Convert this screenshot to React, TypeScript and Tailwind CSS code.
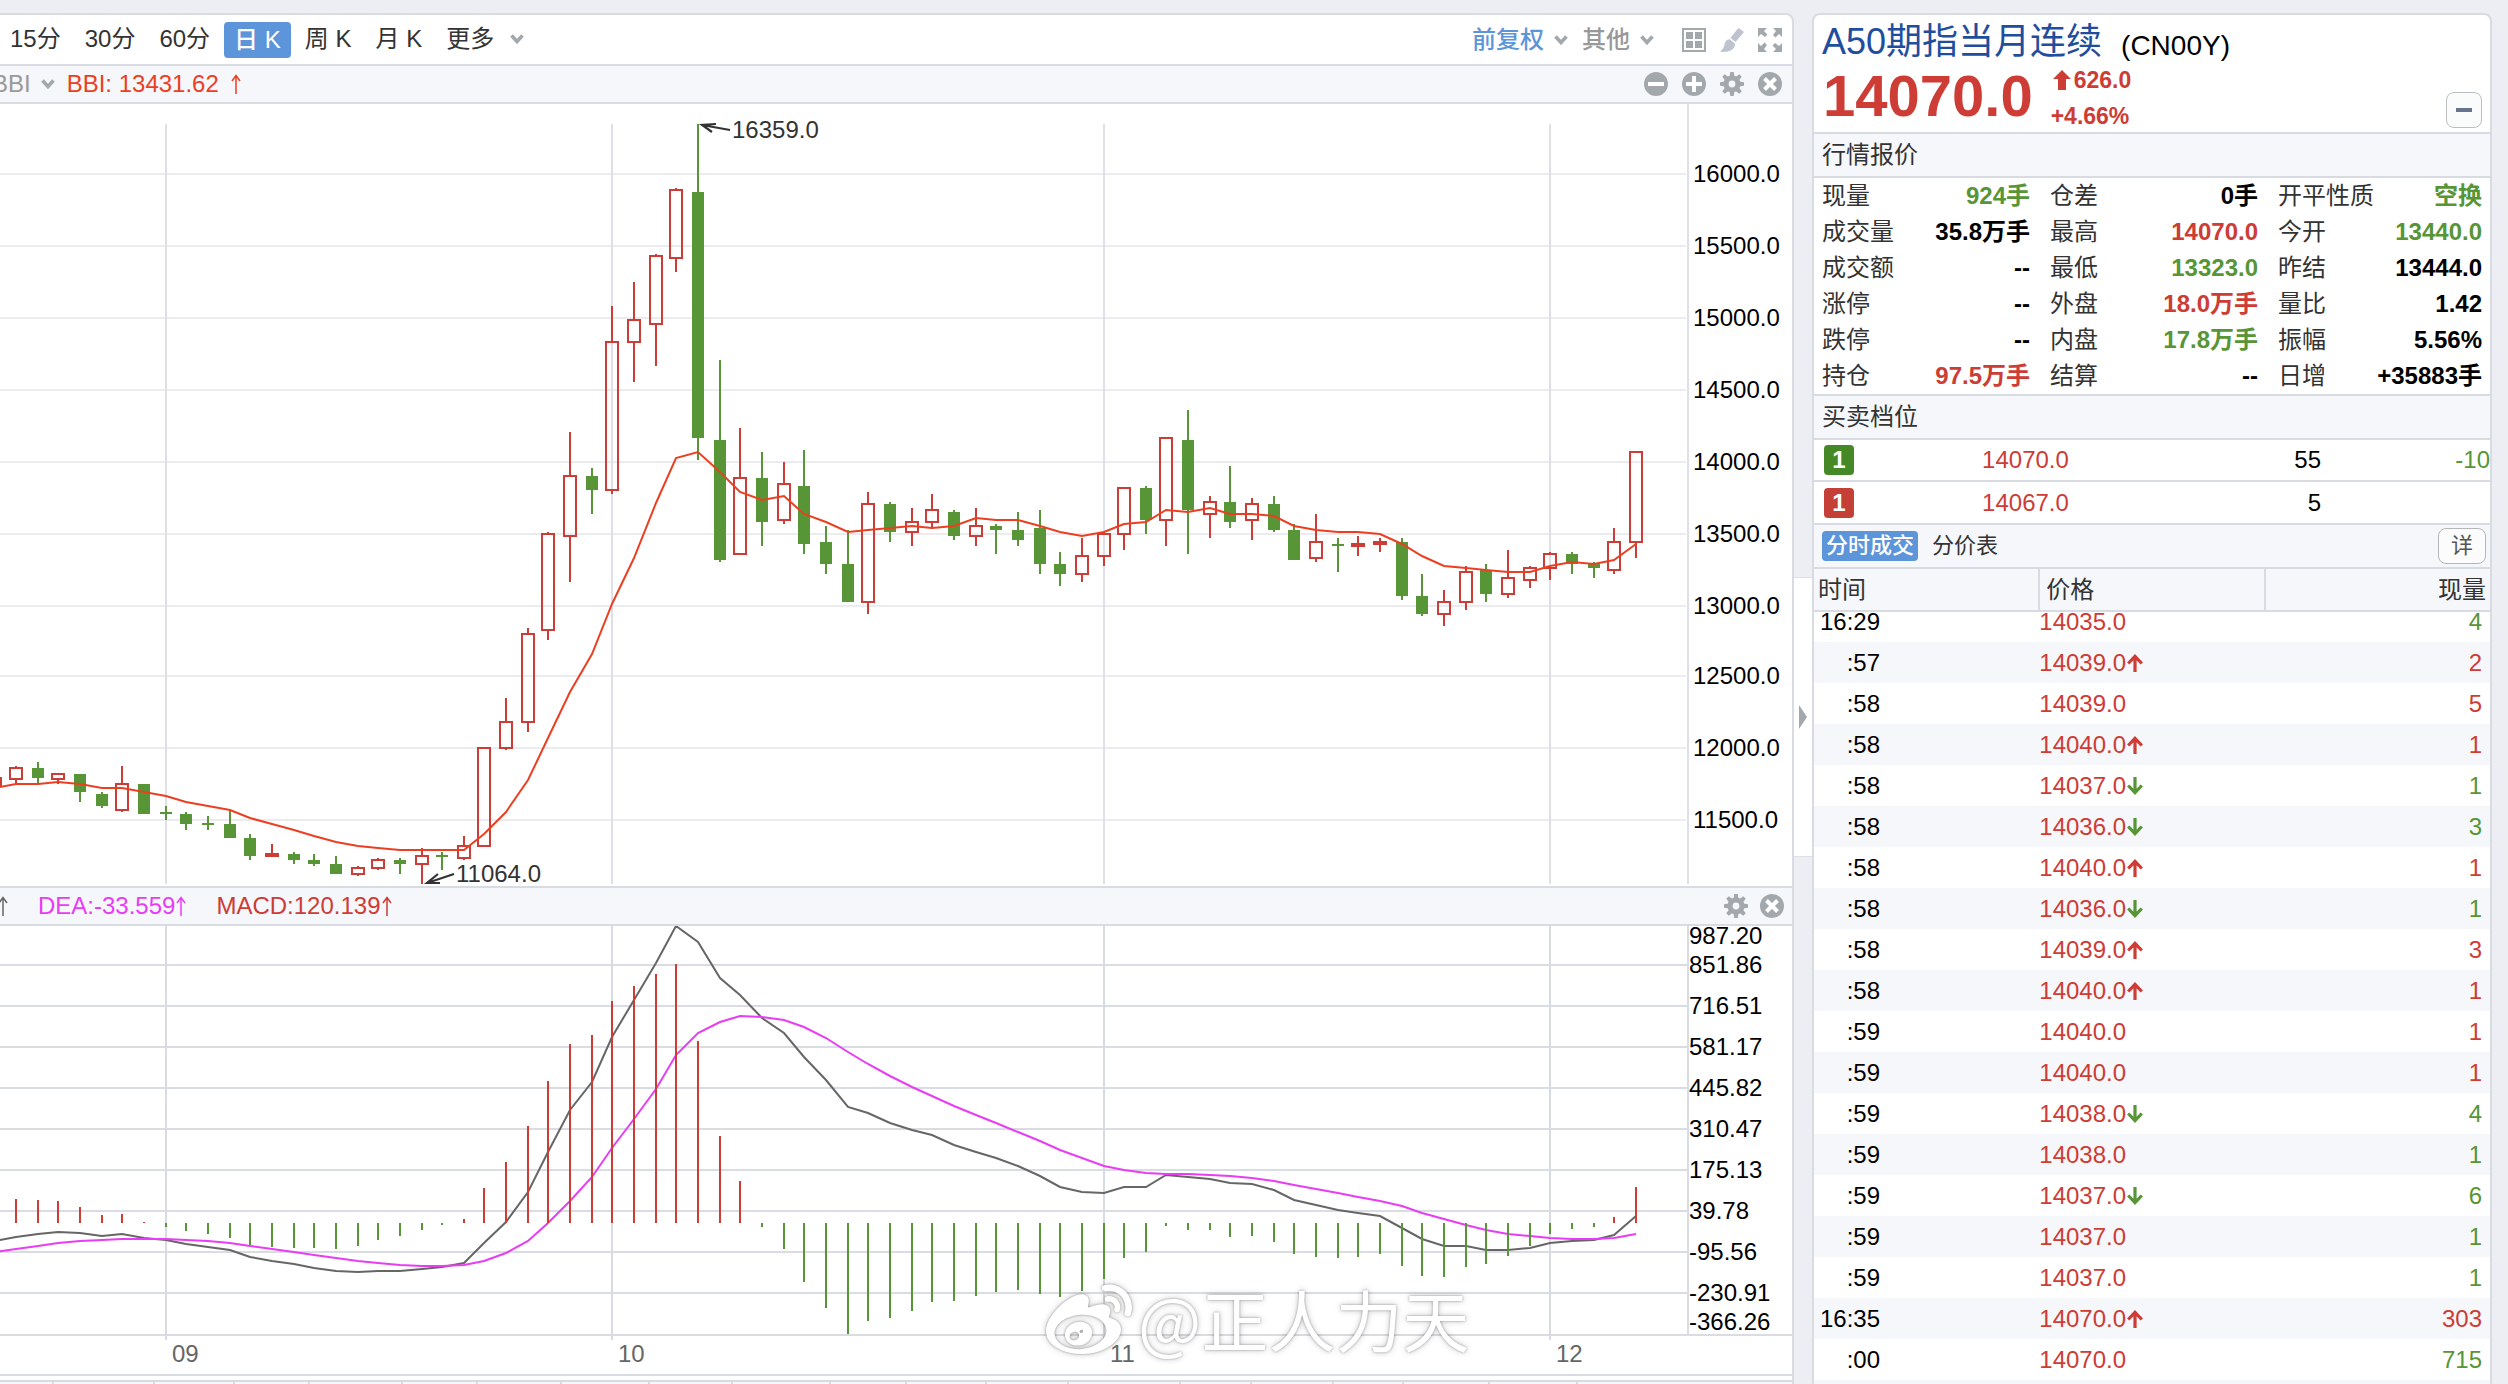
import React from "react";
import { FaWeibo } from "react-icons/fa";

type Tone = "up" | "down" | "flat";

const TONE: Record<Tone, string> = {
  up: "text-[#cd3c35]",
  down: "text-[#579536]",
  flat: "text-black",
};

const GREEN = "#579536";
const RED = "#cd3c35";

/* ---------- chart data: x, kind, wick top, body top, body bottom, wick bottom ---------- */

type Kind = "g" | "r" | "R";
type Candle = [number, Kind, number, number, number, number];

const CANDLES: Candle[] = [
  [-5, "r", 778, 778, 786, 786],
  [16, "r", 766, 768, 779, 784],
  [38, "g", 762, 768, 778, 784],
  [58, "r", 774, 774, 779, 784],
  [80, "g", 774, 774, 792, 802],
  [102, "g", 792, 794, 806, 808],
  [122, "r", 766, 784, 810, 812],
  [144, "g", 784, 784, 814, 814],
  [166, "g", 806, 812, 814, 820],
  [186, "g", 812, 814, 824, 830],
  [208, "g", 816, 823, 825, 830],
  [230, "g", 810, 824, 838, 838],
  [250, "g", 834, 838, 856, 860],
  [272, "R", 844, 853, 857, 857],
  [294, "g", 852, 854, 860, 864],
  [314, "g", 854, 860, 864, 866],
  [336, "g", 856, 864, 874, 874],
  [358, "r", 866, 868, 874, 876],
  [378, "r", 858, 860, 868, 870],
  [400, "g", 858, 860, 864, 874],
  [422, "r", 848, 856, 864, 884],
  [442, "g", 852, 855, 857, 870],
  [464, "r", 836, 846, 858, 860],
  [484, "r", 748, 748, 846, 846],
  [506, "r", 698, 722, 748, 750],
  [528, "r", 628, 634, 722, 732],
  [548, "r", 532, 534, 630, 640],
  [570, "r", 432, 476, 536, 582],
  [592, "g", 468, 476, 490, 514],
  [612, "r", 306, 342, 490, 494],
  [634, "r", 282, 320, 342, 382],
  [656, "r", 254, 256, 324, 366],
  [676, "r", 188, 190, 258, 272],
  [698, "g", 124, 192, 438, 460],
  [720, "g", 360, 440, 560, 562],
  [740, "r", 428, 478, 554, 554],
  [762, "g", 452, 478, 522, 546],
  [784, "r", 462, 484, 520, 524],
  [804, "g", 450, 486, 544, 554],
  [826, "g", 526, 542, 564, 574],
  [848, "g", 530, 564, 602, 602],
  [868, "r", 492, 504, 602, 614],
  [890, "g", 502, 504, 532, 542],
  [912, "r", 508, 522, 532, 546],
  [932, "r", 494, 510, 522, 528],
  [954, "g", 510, 512, 536, 540],
  [976, "r", 508, 526, 536, 546],
  [996, "g", 524, 526, 530, 554],
  [1018, "g", 512, 530, 540, 546],
  [1040, "g", 510, 528, 564, 574],
  [1060, "g", 552, 564, 574, 586],
  [1082, "r", 538, 556, 574, 582],
  [1104, "r", 532, 534, 556, 566],
  [1124, "r", 488, 488, 534, 550],
  [1146, "g", 486, 488, 520, 534],
  [1166, "r", 438, 438, 520, 546],
  [1188, "g", 410, 440, 510, 554],
  [1210, "r", 496, 502, 514, 538],
  [1230, "g", 466, 502, 522, 528],
  [1252, "r", 498, 504, 520, 540],
  [1274, "g", 496, 504, 530, 532],
  [1294, "g", 524, 530, 560, 560],
  [1316, "r", 514, 542, 558, 562],
  [1338, "g", 538, 544, 546, 572],
  [1358, "R", 536, 543, 547, 556],
  [1380, "R", 538, 541, 545, 552],
  [1402, "g", 538, 542, 596, 600],
  [1422, "g", 574, 596, 614, 616],
  [1444, "r", 590, 602, 614, 626],
  [1466, "r", 566, 572, 602, 610],
  [1486, "g", 564, 570, 594, 602],
  [1508, "r", 550, 578, 594, 598],
  [1530, "r", 566, 568, 580, 588],
  [1550, "r", 552, 554, 568, 580],
  [1572, "g", 552, 554, 564, 574],
  [1594, "g", 562, 564, 568, 578],
  [1614, "r", 528, 542, 570, 574],
  [1636, "r", 452, 452, 542, 558],
];

const BBI = [
  788, 784, 784, 782, 784, 788, 788, 792, 796, 802, 806, 810, 818, 824, 830, 836, 842, 846, 848, 850,
  850, 850, 850, 834, 812, 780, 738, 692, 654, 604, 558, 503, 458, 452, 472, 492, 500, 496, 514, 522,
  532, 530, 528, 526, 528, 526, 518, 520, 520, 526, 532, 536, 532, 524, 522, 510, 512, 508, 514, 514,
  516, 526, 530, 532, 532, 534, 544, 556, 566, 568, 570, 572, 572, 566, 562, 564, 560, 544,
];

const ZERO = 1223;

const MACD = [
  1223, 1199, 1200, 1201, 1207, 1215, 1214, 1222, 1227, 1231, 1234, 1238, 1245, 1247, 1248, 1248, 1249,
  1246, 1240, 1236, 1230, 1225, 1219, 1188, 1162, 1126, 1081, 1044, 1035, 1001, 986, 974, 964, 1041,
  1136, 1181, 1227, 1249, 1282, 1308, 1334, 1321, 1318, 1311, 1302, 1301, 1296, 1292, 1290, 1294, 1297,
  1291, 1279, 1258, 1252, 1226, 1230, 1230, 1237, 1236, 1242, 1254, 1257, 1258, 1257, 1254, 1266, 1276,
  1277, 1267, 1264, 1256, 1246, 1234, 1229, 1227, 1217, 1187,
];

const DIF = [
  1241, 1237, 1234, 1232, 1233, 1236, 1234, 1238, 1240, 1244, 1247, 1250, 1257, 1261, 1264, 1268, 1271,
  1272, 1271, 1271, 1269, 1267, 1263, 1243, 1222, 1192, 1152, 1110, 1082, 1037, 1000, 963, 926, 942, 978,
  995, 1018, 1033, 1057, 1080, 1107, 1113, 1123, 1130, 1135, 1145, 1152, 1158, 1166, 1176, 1187, 1192,
  1193, 1187, 1187, 1175, 1177, 1179, 1183, 1184, 1190, 1200, 1205, 1210, 1213, 1216, 1228, 1239, 1246,
  1246, 1250, 1250, 1248, 1243, 1241, 1240, 1235, 1216,
];

const DEA = [
  1252, 1249, 1246, 1243, 1241, 1240, 1239, 1239, 1239, 1240, 1241, 1243, 1246, 1249, 1252, 1255, 1258,
  1261, 1263, 1265, 1266, 1266, 1265, 1261, 1253, 1241, 1223, 1201, 1177, 1148, 1119, 1089, 1055, 1033,
  1022, 1016, 1017, 1020, 1027, 1038, 1052, 1064, 1076, 1087, 1096, 1106, 1115, 1123, 1132, 1141, 1150,
  1158, 1166, 1170, 1173, 1174, 1174, 1175, 1176, 1178, 1181, 1185, 1189, 1193, 1197, 1201, 1206, 1213,
  1219, 1225, 1230, 1234, 1236, 1238, 1239, 1239, 1238, 1234,
];

const line = (ys: number[]) => ys.map((y, i) => `${CANDLES[i][0]},${y}`).join(" ");

const PRICE_TICKS: [string, number][] = [
  ["16000.0", 174],
  ["15500.0", 246],
  ["15000.0", 318],
  ["14500.0", 390],
  ["14000.0", 462],
  ["13500.0", 534],
  ["13000.0", 606],
  ["12500.0", 676],
  ["12000.0", 748],
  ["11500.0", 820],
];

const MACD_TICKS: [string, number][] = [
  ["987.20", 936],
  ["851.86", 965],
  ["716.51", 1006],
  ["581.17", 1047],
  ["445.82", 1088],
  ["310.47", 1129],
  ["175.13", 1170],
  ["39.78", 1211],
  ["-95.56", 1252],
  ["-230.91", 1293],
  ["-366.26", 1322],
];

const MONTHS: [string, number][] = [
  ["09", 166],
  ["10", 612],
  ["11", 1104],
  ["12", 1550],
];

/* ---------- icons ---------- */

const Chevron = () => (
  <svg viewBox="0 0 14 10" className="h-[10px] w-[14px] shrink-0" aria-hidden="true">
    <path d="M1.5 1.5 7 7.5l5.5-6" fill="none" stroke="#a3a8ac" strokeWidth="3.6" />
  </svg>
);

const ThinArrow = () => (
  <svg viewBox="0 0 10 20" className="h-5 w-[10px] shrink-0" aria-hidden="true">
    <path d="M5 20V2M1 7l4-5.500L9 7" fill="none" stroke="currentColor" strokeWidth="1.500" />
  </svg>
);

const MinusCircle = () => (
  <svg viewBox="0 0 24 24" className="size-6" aria-hidden="true">
    <circle cx="12" cy="12" r="12" fill="#a3a8ac" />
    <path d="M4 12h16" stroke="#fff" strokeWidth="4" />
  </svg>
);

const PlusCircle = () => (
  <svg viewBox="0 0 24 24" className="size-6" aria-hidden="true">
    <circle cx="12" cy="12" r="12" fill="#a3a8ac" />
    <path d="M4 12h16M12 4v16" stroke="#fff" strokeWidth="4" />
  </svg>
);

const CloseCircle = () => (
  <svg viewBox="0 0 24 24" className="size-6" aria-hidden="true">
    <circle cx="12" cy="12" r="12" fill="#a3a8ac" />
    <path d="m6.5 6.5 11 11m0-11-11 11" stroke="#fff" strokeWidth="4" />
  </svg>
);

const Gear = () => (
  <svg viewBox="0 0 24 24" className="size-6" aria-hidden="true">
    <g fill="#a3a8ac">
      {[0, 45, 90, 135].map((a) => (
        <path key={a} d="M10.3 0h3.4l.8 5v14l-.8 5h-3.4l-.8-5V5z" transform={`rotate(${a} 12 12)`} />
      ))}
      <circle cx="12" cy="12" r="8.5" />
    </g>
    <circle cx="12" cy="12" r="3.4" fill="#f5f7fa" />
  </svg>
);

const GridIcon = () => (
  <svg viewBox="0 0 24 24" className="size-6" aria-hidden="true">
    <rect x="1" y="1" width="22" height="22" fill="none" stroke="#a3a8ac" strokeWidth="2" />
    <path d="M4 4h7v7H4zM13 4h7v7h-7zM4 13h7v7H4zM13 13h7v7h-7z" fill="#a3a8ac" />
  </svg>
);

const Brush = () => (
  <svg viewBox="0 0 24 24" className="size-6" aria-hidden="true">
    <path d="M18.5 0 24 4l-8.500 10-5-4.200z" fill="#bfc3d0" />
    <path d="M9.600 11.200c-3 .2-4.600 2-5 4.800-.4 3-1.800 5.500-4.600 7.600 5 .9 12.800-.2 14.600-5.400.4-1.200.3-2.100 0-3z" fill="#bfc3d0" />
  </svg>
);

const Expand = () => (
  <svg viewBox="0 0 24 24" className="size-6" aria-hidden="true">
    {[0, 90, 180, 270].map((a) => (
      <g key={a} transform={`rotate(${a} 12 12)`}>
        <path d="M0 0h9L6 3l3.500 3.500-2.500 2.500L3 6 0 9z" fill="#a3a8ac" />
      </g>
    ))}
  </svg>
);

const Tick = ({ dir }: { dir: "up" | "down" }) => (
  <svg viewBox="0 0 16 18" className="ml-px inline-block h-[18px] w-4 align-[-1px]" aria-hidden="true">
    <path
      d={dir === "up" ? "M8 18V2.500M1.200 9.500 8 2.400l6.800 7.100" : "M8 0v15.500M1.200 8.500 8 15.600l6.800-7.100"}
      fill="none"
      stroke={dir === "up" ? RED : GREEN}
      strokeWidth="3.200"
    />
  </svg>
);

/* ---------- charts ---------- */

function CandleShape({ c }: { c: Candle }) {
  const [x, kind, hi, top, bottom, lo] = c;
  const color = kind === "g" ? GREEN : RED;
  if (kind === "r") {
    return (
      <g stroke={color} strokeWidth="2" fill="none">
        <path d={`M${x} ${hi}V${top}M${x} ${bottom}V${lo}`} />
        <rect x={x - 6} y={top} width="12" height={bottom - top} />
      </g>
    );
  }
  const half = kind === "g" ? 6 : 7;
  return (
    <g fill={color}>
      <rect x={x - 1} y={hi} width="2" height={lo - hi} />
      <rect x={x - half} y={top} width={half * 2} height={bottom - top} />
    </g>
  );
}

function PriceChart() {
  return (
    <svg viewBox="0 104 1792 782" className="block h-auto w-full shrink-0" role="img" aria-label="日K">
      <g stroke="#ebebf0" strokeWidth="2">
        {PRICE_TICKS.map(([t, y]) => (
          <path key={t} d={`M0 ${y}H1686`} />
        ))}
      </g>
      <g stroke="#dfe0e7" strokeWidth="2">
        {MONTHS.map(([m, x]) => (
          <path key={m} d={`M${x} 124V884`} />
        ))}
        <path d="M1688 104V884" />
      </g>
      {CANDLES.map((c) => (
        <CandleShape key={c[0]} c={c} />
      ))}
      <polyline points={line(BBI)} fill="none" stroke="#ec3f22" strokeWidth="2" />
      <g fill="none" stroke="#333" strokeWidth="2.200">
        <path d="M730 130 702 125M716 124 702 125l10 7" />
        <path d="M454 874 427 883M438 874l-11 9h13" />
      </g>
      <g fontSize="24" fill="#333">
        <text x="732" y="138">16359.0</text>
        <text x="456" y="882">11064.0</text>
      </g>
      <g fontSize="24" fill="#000">
        {PRICE_TICKS.map(([t, y]) => (
          <text key={t} x="1693" y={y + 8}>
            {t}
          </text>
        ))}
      </g>
    </svg>
  );
}

function MacdChart() {
  return (
    <svg viewBox="0 926 1792 448" className="block h-auto w-full shrink-0" role="img" aria-label="MACD">
      <g stroke="#d9dce2" strokeWidth="2">
        {MACD_TICKS.slice(1, -1).map(([t, y]) => (
          <path key={t} d={`M0 ${y}H1687`} />
        ))}
        <path d="M0 1335H1792M1688 926V1335" />
      </g>
      <g stroke="#d9dbe3" strokeWidth="2">
        {MONTHS.map(([m, x]) => (
          <path key={m} d={`M${x} 926V1340`} />
        ))}
      </g>
      <polyline points={line(DIF)} fill="none" stroke="#666" strokeWidth="2" />
      <polyline points={line(DEA)} fill="none" stroke="#e83cf5" strokeWidth="2" />
      {MACD.map((y, i) => (
        <path
          key={i}
          d={`M${CANDLES[i][0]} ${ZERO}V${y}`}
          stroke={y < ZERO ? RED : GREEN}
          strokeWidth="2"
        />
      ))}
      <g className="[filter:drop-shadow(0_0_1px_rgb(0_0_0/0.35))_drop-shadow(0_0_3px_rgb(0_0_0/0.22))]" fill="#fff">
        <FaWeibo x={1046} y={1279} size={86} color="#fff" />
        <text x="1138" y="1347" fontSize="67" className="font-['Noto_Sans_CJK_SC',sans-serif]">
          @正人力天
        </text>
      </g>
      <g fontSize="24" fill="#666">
        {MONTHS.map(([m, x]) => (
          <text key={m} x={x + 6} y="1362">
            {m}
          </text>
        ))}
      </g>
      <g fontSize="24" fill="#000">
        {MACD_TICKS.map(([t, y]) => (
          <text key={t} x="1689" y={y + 8}>
            {t}
          </text>
        ))}
      </g>
    </svg>
  );
}

/* ---------- left panel ---------- */

const PERIODS = ["15分", "30分", "60分", "日 K", "周 K", "月 K"];

function ChartPanel() {
  return (
    <main className="flex min-w-0 flex-1 flex-col rounded-tr-lg border-t-2 border-r-2 border-[#d9dbe3] bg-white">
      <div className="flex h-[49px] shrink-0 items-center justify-between pr-[10px]">
        <div className="flex items-center gap-1">
          {PERIODS.map((p) => (
            <button
              key={p}
              className={
                p === "日 K"
                  ? "h-9 rounded bg-[#5d95da] px-[10px] leading-[34px] font-medium text-white"
                  : "h-9 px-[10px] pb-[2px] text-[#333]"
              }
            >
              {p}
            </button>
          ))}
          <button className="flex h-9 items-center gap-4 px-[10px] pb-[2px] text-[#333]">
            更多
            <Chevron />
          </button>
        </div>
        <div className="flex items-center">
          <button className="flex items-center gap-[10px] font-medium text-[#5d95da]">
            前复权
            <Chevron />
          </button>
          <button className="ml-[14px] flex items-center gap-[10px] font-medium text-[#999]">
            其他
            <Chevron />
          </button>
          <div className="ml-7 flex gap-[14px]">
            <button aria-label="多图"><GridIcon /></button>
            <button aria-label="画线"><Brush /></button>
            <button aria-label="全屏"><Expand /></button>
          </div>
        </div>
      </div>

      <div className="flex h-10 shrink-0 items-center justify-between border-y-2 border-[#d9dbe3] bg-[#f5f7fa] pr-[10px]">
        <div className="flex items-center">
          <button className="-ml-2 flex items-center gap-[10px] text-[#999]">
            BBI
            <Chevron />
          </button>
          <span className="ml-3 flex items-center gap-3 text-[#ec3f22]">
            BBI: 13431.62
            <ThinArrow />
          </span>
        </div>
        <div className="flex gap-[14px]">
          <button aria-label="缩小"><MinusCircle /></button>
          <button aria-label="放大"><PlusCircle /></button>
          <button aria-label="设置"><Gear /></button>
          <button aria-label="关闭"><CloseCircle /></button>
        </div>
      </div>
      <PriceChart />

      <div className="flex h-10 shrink-0 items-center justify-between border-y-2 border-[#d9dbe3] bg-[#f5f7fa] pr-2">
        <div className="flex items-center gap-[30px]">
          <span className="-ml-[2px] text-[#666]">
            <ThinArrow />
          </span>
          <span className="flex items-center gap-px text-[#e83cf5]">
            DEA:-33.559
            <ThinArrow />
          </span>
          <span className="flex items-center gap-px text-[#cd3c35]">
            MACD:120.139
            <ThinArrow />
          </span>
        </div>
        <div className="flex gap-3">
          <button aria-label="设置"><Gear /></button>
          <button aria-label="关闭"><CloseCircle /></button>
        </div>
      </div>
      <MacdChart />
      <div className="h-2 shrink-0 border-y-2 border-[#d9dbe3]" />
      <div className="flex h-10 shrink-0 bg-[#f5f7fa]">
        <div className="w-[54px] border-r-2 border-[#d9dbe3]" />
        <div className="w-[101px] border-r-2 border-[#d9dbe3]" />
        <div className="w-20 border-r-2 border-[#d9dbe3]" />
        <div className="w-[75px] border-r-2 border-[#d9dbe3]" />
        <div className="w-[93px] border-r-2 border-[#d9dbe3]" />
        <div className="w-[75px] border-r-2 border-[#d9dbe3]" />
        <div className="w-[84px] border-r-2 border-[#d9dbe3]" />
        <div className="w-[88px] border-r-2 border-[#d9dbe3]" />
        <div className="w-[83px] border-r-2 border-[#d9dbe3]" />
        <div className="w-[98px] border-r-2 border-[#d9dbe3]" />
        <div className="w-[76px] border-r-2 border-[#d9dbe3]" />
        <div className="w-20 border-r-2 border-[#d9dbe3]" />
        <div className="w-[82px] border-r-2 border-[#d9dbe3]" />
        <div className="w-28 border-r-2 border-[#d9dbe3]" />
        <div className="w-[71px] border-r-2 border-[#d9dbe3]" />
        <div className="w-[82px] border-r-2 border-[#d9dbe3]" />
        <div className="w-[70px] border-r-2 border-[#d9dbe3]" />
        <div className="w-[86px] border-r-2 border-[#d9dbe3]" />
        <div className="w-[88px] border-r-2 border-[#d9dbe3]" />
      </div>
    </main>
  );
}

/* ---------- right panel ---------- */

const QUOTES: [string, string, Tone][] = [
  ["现量", "924手", "down"],
  ["仓差", "0手", "flat"],
  ["开平性质", "空换", "down"],
  ["成交量", "35.8万手", "flat"],
  ["最高", "14070.0", "up"],
  ["今开", "13440.0", "down"],
  ["成交额", "--", "flat"],
  ["最低", "13323.0", "down"],
  ["昨结", "13444.0", "flat"],
  ["涨停", "--", "flat"],
  ["外盘", "18.0万手", "up"],
  ["量比", "1.42", "flat"],
  ["跌停", "--", "flat"],
  ["内盘", "17.8万手", "down"],
  ["振幅", "5.56%", "flat"],
  ["持仓", "97.5万手", "up"],
  ["结算", "--", "flat"],
  ["日增", "+35883手", "flat"],
];

const TRADES: [string, string, "" | "up" | "down", string, Tone][] = [
  ["16:29", "14035.0", "", "4", "down"],
  [":57", "14039.0", "up", "2", "up"],
  [":58", "14039.0", "", "5", "up"],
  [":58", "14040.0", "up", "1", "up"],
  [":58", "14037.0", "down", "1", "down"],
  [":58", "14036.0", "down", "3", "down"],
  [":58", "14040.0", "up", "1", "up"],
  [":58", "14036.0", "down", "1", "down"],
  [":58", "14039.0", "up", "3", "up"],
  [":58", "14040.0", "up", "1", "up"],
  [":59", "14040.0", "", "1", "up"],
  [":59", "14040.0", "", "1", "up"],
  [":59", "14038.0", "down", "4", "down"],
  [":59", "14038.0", "", "1", "down"],
  [":59", "14037.0", "down", "6", "down"],
  [":59", "14037.0", "", "1", "down"],
  [":59", "14037.0", "", "1", "down"],
  ["16:35", "14070.0", "up", "303", "up"],
  [":00", "14070.0", "", "715", "down"],
];

function QuotePanel() {
  return (
    <aside className="mr-4 flex w-[680px] shrink-0 flex-col rounded-t-lg border-x-2 border-t-2 border-[#d9dbe3] bg-white">
      <header className="flex h-[119px] shrink-0 justify-between border-b-2 border-[#d9dbe3] pr-2 pl-2">
        <div>
          <h1 className="flex h-[54px] items-center gap-[19px] text-[36px] leading-[54px] text-[#1f4e9e]">
            A50期指当月连续
            <span className="pt-2 text-[28px] text-black">(CN00Y)</span>
          </h1>
          <div className="flex gap-[18px] pl-px text-[#cd3c35]">
            <strong className="-mt-px text-[58px] leading-[56px]">14070.0</strong>
            <div className="flex flex-col text-[23px] leading-9 font-bold">
              <span className="-mt-[7px] flex items-center gap-[3px] pl-[2px]">
                <svg viewBox="0 0 18 20" className="h-5 w-[18px]" aria-hidden="true">
                  <path d="M9 0 18 9h-5v11H5V9H0z" fill={RED} />
                </svg>
                626.0
              </span>
              <span>+4.66%</span>
            </div>
          </div>
        </div>
        <button
          aria-label="收起"
          className="mb-1 flex h-9 w-9 items-center justify-center self-end rounded-lg border border-[#bcbfc2] bg-[#fafbfb]"
        >
          <span className="h-1 w-4 bg-[#66758c]" />
        </button>
      </header>

      <h2 className="flex h-11 shrink-0 items-center border-b-2 border-[#d9dbe3] bg-[#f5f7fa] pl-2 text-[#333]">
        行情报价
      </h2>
      <dl className="grid shrink-0 grid-cols-[208fr_208fr_204fr] gap-x-5 border-b-2 border-[#d9dbe3] px-2">
        {QUOTES.map(([label, value, tone]) => (
          <div key={label} className="flex h-9 items-center justify-between whitespace-nowrap">
            <dt className="text-[#333]">{label}</dt>
            <dd className={`font-bold ${TONE[tone]}`}>{value}</dd>
          </div>
        ))}
      </dl>

      <h2 className="flex h-11 shrink-0 items-center border-b-2 border-[#d9dbe3] bg-[#f5f7fa] pl-2 text-[#333]">
        买卖档位
      </h2>
      <table className="w-full shrink-0 table-fixed">
        <tbody>
          <tr className="h-[41px] border-b-2 border-[#d9dbe3]">
            <td className="w-[12%] p-0 pl-[10px]">
              <span className="flex size-[30px] items-center justify-center rounded bg-[#458926] font-bold text-white">1</span>
            </td>
            <td className="w-[26%] p-0 pr-[2px] text-right text-[#cd3c35]">14070.0</td>
            <td className="p-0 text-right">55</td>
            <td className="w-[25%] p-0 text-right text-[#579536]">-10</td>
          </tr>
          <tr className="h-[43px] border-b-2 border-[#d9dbe3]">
            <td className="p-0 pl-[10px]">
              <span className="flex size-[30px] items-center justify-center rounded bg-[#c44037] font-bold text-white">1</span>
            </td>
            <td className="p-0 pr-[2px] text-right text-[#cd3c35]">14067.0</td>
            <td className="p-0 text-right">5</td>
            <td />
          </tr>
        </tbody>
      </table>

      <div className="flex h-11 shrink-0 items-center justify-between border-b-2 border-[#d9dbe3] bg-[#f5f7fa] pr-1 pl-2 text-[22px]">
        <div className="flex items-center gap-[14px]">
          <button className="h-[30px] rounded bg-[#5d95da] px-1 leading-[30px] font-medium text-white">分时成交</button>
          <button className="leading-[30px] text-[#333]">分价表</button>
        </div>
        <button className="h-9 w-12 rounded-lg border border-[#b4b7ba] bg-[#fcfcfc] leading-[34px] text-[#555]">详</button>
      </div>

      <table className="w-full shrink-0 table-fixed">
        <thead>
          <tr className="h-[42px] border-b-2 border-[#d9dbe3] bg-[#f5f7fa] text-[#333]">
            <th className="w-1/3 border-r-2 border-[#d9dbe3] p-0 pl-1 text-left font-normal">时间</th>
            <th className="w-1/3 border-r-2 border-[#d9dbe3] p-0 pl-[6px] text-left font-normal">价格</th>
            <th className="p-0 pr-1 text-right font-normal">现量</th>
          </tr>
        </thead>
        <tbody>
          {TRADES.map(([time, price, dir, vol, tone], i) => (
            <tr
              key={i}
              className={
                i === 0
                  ? "h-[31px] align-top leading-5"
                  : "h-[41px] leading-[41px] even:bg-[#f5f7fa]"
              }
            >
              <td className="p-0">
                <span className="block w-[66px] text-right">{time}</span>
              </td>
              <td className="p-0 text-[#cd3c35]">
                {price}
                {dir && <Tick dir={dir} />}
              </td>
              <td className={`p-0 pr-2 text-right ${TONE[tone]}`}>{vol}</td>
            </tr>
          ))}
        </tbody>
      </table>
      <div className="min-h-1 grow bg-[#f5f7fa]" />
    </aside>
  );
}

export default function App() {
  return (
    <div className="flex h-screen overflow-hidden bg-[#edeef4] pt-[13px] font-['Liberation_Sans','Noto_Sans_CJK_SC',sans-serif] text-2xl leading-8 text-black">
      <ChartPanel />
      <div className="flex w-[18px] shrink-0 flex-col pt-[564px]">
        <button
          aria-label="折叠侧栏"
          className="flex h-[280px] w-full items-center justify-center border-y border-[#dfe0e6] bg-white"
        >
          <svg viewBox="0 0 8 24" className="h-6 w-2" aria-hidden="true">
            <path d="M0 0 8 12 0 24z" fill="#a3a8ac" />
          </svg>
        </button>
      </div>
      <QuotePanel />
    </div>
  );
}
